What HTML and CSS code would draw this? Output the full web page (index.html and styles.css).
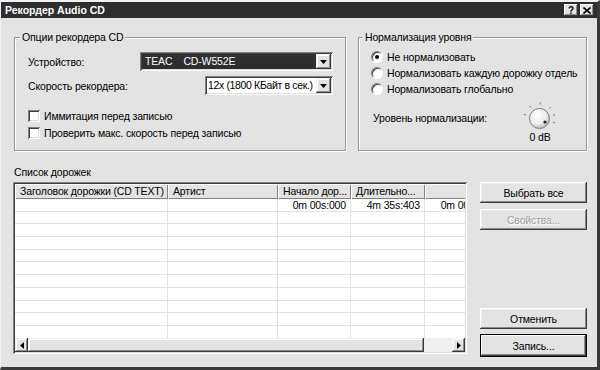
FILE: index.html
```html
<!DOCTYPE html>
<html lang="ru">
<head>
  <meta charset="UTF-8" />
  <title>Рекордер Audio CD</title>
  <link rel="stylesheet" href="styles.css">
</head>
<body>

  <div class="window">
    <div class="titlebar">
      <span class="title">Рекордер Audio CD</span>
      <div class="caption-btns">
        <span class="cap-btn">?</span>
        <span class="cap-btn">
          <svg width="8" height="7" viewBox="0 0 8 7"><path d="M0.5 0.5 L7.5 6.5 M7.5 0.5 L0.5 6.5" stroke="#000" stroke-width="1.6"/></svg>
        </span>
      </div>
    </div>

    <div class="client">
      <div class="groups">
        <div class="group group-rec">
          <span class="group-title">Опции рекордера CD</span>
          <div class="field-row first">
            <span>Устройство:</span>
            <div class="combo combo-device">
              <span class="combo-value selected">TEAC<span class="model">CD-W552E</span></span>
              <span class="combo-btn"><svg width="7" height="4" viewBox="0 0 7 4"><path d="M0 0 H7 L3.5 4 Z" fill="#000"/></svg></span>
            </div>
          </div>
          <div class="field-row">
            <span>Скорость рекордера:</span>
            <div class="combo combo-speed">
              <span class="combo-value">12x (1800 КБайт в сек.)</span>
              <span class="combo-btn"><svg width="7" height="4" viewBox="0 0 7 4"><path d="M0 0 H7 L3.5 4 Z" fill="#000"/></svg></span>
            </div>
          </div>
          <div class="check-row first"><span class="checkbox"></span>Иммитация перед записью</div>
          <div class="check-row"><span class="checkbox"></span>Проверить макс. скорость перед записью</div>
        </div>

        <div class="group group-norm">
          <span class="group-title">Нормализация уровня</span>
          <div class="radio-row first"><span class="radio checked"></span>Не нормализовать</div>
          <div class="radio-row"><span class="radio"></span>Нормализовать каждую дорожку отдель</div>
          <div class="radio-row"><span class="radio"></span>Нормализовать глобально</div>
          <div class="level-row">
            <span class="level-label">Уровень нормализации:</span>
            <div class="knob">
              <svg width="40" height="30" viewBox="0 0 40 30">
                <defs>
                  <radialGradient id="knobFill" cx="0.38" cy="0.32" r="0.75">
                    <stop offset="0" stop-color="#ffffff"/>
                    <stop offset="0.6" stop-color="#ececec"/>
                    <stop offset="1" stop-color="#b0b0b0"/>
                  </radialGradient>
                </defs>
                <g stroke="#777" stroke-width="1">
                  <line x1="6" y1="13.9" x2="4" y2="13.4"/>
                  <line x1="10.9" y1="6.5" x2="9.7" y2="4.9"/>
                  <line x1="20.2" y1="3.5" x2="20.3" y2="1.5"/>
                  <line x1="29.4" y1="7.6" x2="30.8" y2="6.2"/>
                  <line x1="33.1" y1="14.1" x2="35" y2="13.6"/>
                  <line x1="33" y1="21.4" x2="34.9" y2="21.9"/>
                </g>
                <circle cx="19.5" cy="17.5" r="10" fill="url(#knobFill)" stroke="#7c7c7c"/>
                <circle cx="25" cy="21" r="1.6" fill="#222"/>
              </svg>
              <span class="knob-value">0 dB</span>
            </div>
          </div>
        </div>
      </div>

      <div class="tracks-label">Список дорожек</div>

      <div class="tracks">
        <div class="list">
          <div class="list-header">
            <span>Заголовок дорожки (CD TEXT)</span>
            <span>Артист</span>
            <span>Начало дор...</span>
            <span>Длительно...</span>
            <span class="right">Пауза</span>
          </div>
          <div class="list-body">
            <span></span>
            <span></span>
            <span>0m 00s:000</span>
            <span>4m 35s:403</span>
            <span>0m 00s:000</span>
          </div>
          <div class="hscroll">
            <span class="sb-btn"><svg width="4" height="7" viewBox="0 0 4 7"><path d="M4 0 V7 L0 3.5 Z" fill="#000"/></svg></span>
            <span class="sb-thumb"></span>
            <span class="sb-track"></span>
            <span class="sb-btn"><svg width="4" height="7" viewBox="0 0 4 7"><path d="M0 0 V7 L4 3.5 Z" fill="#000"/></svg></span>
          </div>
        </div>

        <div class="actions">
          <div class="actions-top">
            <button class="btn">Выбрать все</button>
            <button class="btn" disabled>Свойства...</button>
          </div>
          <div class="actions-bottom">
            <button class="btn">Отменить</button>
            <button class="btn btn-default">Запись...</button>
          </div>
        </div>
      </div>
    </div>
  </div>

</body>
</html>
```

FILE: styles.css
```css
* {
  box-sizing: border-box;
}
body {
  margin: 0;
  font-family: "Liberation Sans", Arial, sans-serif;
  font-size: 10.5px;
  letter-spacing: -0.15px;
  color: #000;
  background: #e3e3e3;
}
.window {
  width: 600px;
  height: 370px;
  background: #e3e3e3;
  border-style: solid;
  border-width: 2px 3px 3px 1px;
  border-color: #f2f2f2 #3a3a3a #3a3a3a #f2f2f2;
  display: flex;
  flex-direction: column;
}

/* title bar */
.titlebar {
  flex: none;
  height: 16px;
  background: #2e2e2e;
  color: #fff;
  display: flex;
  align-items: center;
  justify-content: space-between;
  padding: 0 3px 0 4px;
}
.title {
  font-weight: bold;
  letter-spacing: 0;
}
.caption-btns {
  display: flex;
  gap: 2px;
}
.cap-btn {
  width: 14px;
  height: 12px;
  background: #e3e3e3;
  color: #000;
  font-weight: bold;
  font-size: 10px;
  display: flex;
  align-items: center;
  justify-content: center;
  box-shadow: inset -1px -1px #3a3a3a, inset 1px 1px #fff, inset -2px -2px #8a8a8a;
}

.client {
  flex: 1;
  display: flex;
  flex-direction: column;
  padding: 19px 10px 10px 13px;
}

/* group boxes */
.groups {
  display: flex;
  gap: 12px;
}
.group {
  height: 114px;
  border: 1px solid #999;
  box-shadow: 1px 1px #fff, inset 1px 1px #fff;
  display: flex;
  flex-direction: column;
}
.group-rec {
  width: 332px;
  padding: 0 12px 0 13px;
}
.group-norm {
  width: 229px;
  padding: 0 6px 0 12px;
}
.group-title {
  align-self: flex-start;
  margin: -7px 0 0 -8px;
  padding: 0 2px;
  line-height: 13px;
  background: #e3e3e3;
}

.field-row {
  height: 19px;
  display: flex;
  align-items: center;
  justify-content: space-between;
  margin-top: 5px;
}
.field-row.first {
  margin-top: 8px;
}
.combo {
  height: 19px;
  padding: 2px;
  background: #fff;
  display: flex;
  box-shadow: inset 1px 1px #808080, inset -1px -1px #fff, inset 2px 2px #404040, inset -2px -2px #dcdcdc;
}
.combo-device {
  width: 193px;
}
.combo-speed {
  width: 128px;
}
.combo-value {
  flex: 1;
  padding-left: 2px;
  line-height: 15px;
  white-space: nowrap;
  overflow: hidden;
}
.combo-speed .combo-value {
  letter-spacing: -0.35px;
  padding-left: 1px;
}
.combo-value.selected {
  background: #2e2e2e;
  color: #fff;
  padding-left: 3px;
}
.model {
  margin-left: 11px;
}
.combo-btn,
.sb-btn {
  flex: none;
  width: 15px;
  height: 15px;
  background: #e3e3e3;
  display: flex;
  align-items: center;
  justify-content: center;
  box-shadow: inset -1px -1px #3a3a3a, inset 1px 1px #f0f0f0, inset -2px -2px #8a8a8a, inset 2px 2px #fff;
}

.check-row,
.radio-row {
  display: flex;
  align-items: center;
  white-space: nowrap;
  overflow: hidden;
}
.check-row {
  height: 17px;
}
.check-row.first {
  margin-top: 12px;
}
.checkbox {
  flex: none;
  width: 12px;
  height: 12px;
  margin-right: 4px;
  background: #fff;
  box-shadow: inset 1px 1px #808080, inset -1px -1px #fff, inset 2px 2px #404040, inset -2px -2px #dcdcdc;
}
.radio-row {
  height: 16px;
}
.radio-row.first {
  margin-top: 5px;
}
.radio {
  flex: none;
  width: 12px;
  height: 12px;
  margin-right: 4px;
  border-radius: 50%;
  background: #fff;
  border: 1px solid;
  border-color: #808080 #fff #fff #808080;
  box-shadow: inset 1px 1px #404040;
  display: flex;
  align-items: center;
  justify-content: center;
}
.radio.checked::after {
  content: "";
  width: 4px;
  height: 4px;
  border-radius: 50%;
  background: #000;
}

.level-row {
  display: flex;
  align-items: flex-start;
  margin-top: 4px;
}
.level-label {
  margin: 11px 0 0 2px;
}
.knob {
  width: 40px;
  margin-left: auto;
  margin-right: 20px;
  display: flex;
  flex-direction: column;
  align-items: center;
}
.knob svg {
  display: block;
}
.knob-value {
  line-height: 13px;
}

/* track list */
.tracks-label {
  margin: 15px 0 3px;
  line-height: 13px;
}
.tracks {
  height: 175px;
  margin-left: -1px;
  display: flex;
  gap: 13px;
}
.list {
  width: 454px;
  height: 172px;
  padding: 2px;
  background: #fff;
  display: flex;
  flex-direction: column;
  overflow: hidden;
  box-shadow: inset 1px 1px #808080, inset -1px -1px #fff, inset 2px 2px #404040, inset -2px -2px #dcdcdc;
}
.list-header,
.list-body {
  display: grid;
  grid-template-columns: 153px 110px 73px 74px 74px;
  overflow: hidden;
}
.list-header {
  flex: none;
  height: 15px;
  background: #e3e3e3;
}
.list-header span {
  padding-left: 5px;
  line-height: 14px;
  white-space: nowrap;
  overflow: hidden;
  box-shadow: inset 1px 1px #fff, inset -1px -1px #808080;
}
.list-header .right {
  text-align: right;
  padding-right: 5px;
}
.list-body {
  flex: 1;
  background: repeating-linear-gradient(#fff 0 11.7px, #e2e2e2 11.7px 12.7px);
}
.list-body span {
  border-right: 1px solid #e2e2e2;
  padding-right: 4px;
  text-align: right;
  line-height: 12.7px;
  white-space: nowrap;
}
.hscroll {
  flex: none;
  height: 14px;
  display: flex;
}
.sb-btn {
  width: 13px;
  height: 14px;
}
.sb-thumb {
  width: 396px;
  background: #e3e3e3;
  box-shadow: inset -1px -1px #3a3a3a, inset 1px 1px #f0f0f0, inset -2px -2px #8a8a8a, inset 2px 2px #fff;
}
.sb-track {
  flex: 1;
  background: #efefef;
}

/* buttons */
.actions {
  width: 107px;
  display: flex;
  flex-direction: column;
  justify-content: space-between;
}
.actions-top {
  display: flex;
  flex-direction: column;
  gap: 6px;
}
.actions-bottom {
  display: flex;
  flex-direction: column;
  gap: 5px;
}
.btn {
  height: 21px;
  padding: 0;
  border: none;
  font: inherit;
  letter-spacing: inherit;
  color: #000;
  background: #e3e3e3;
  box-shadow: inset -1px -1px #3a3a3a, inset 1px 1px #fff, inset -2px -2px #8a8a8a, inset 2px 2px #ececec;
}
.btn:disabled {
  color: #a0a0a0;
  text-shadow: 1px 1px #fff;
}
.btn-default {
  height: 23px;
  box-shadow: inset 0 0 0 1px #000, inset -2px -2px #3a3a3a, inset 2px 2px #fff, inset -3px -3px #8a8a8a;
}
```
